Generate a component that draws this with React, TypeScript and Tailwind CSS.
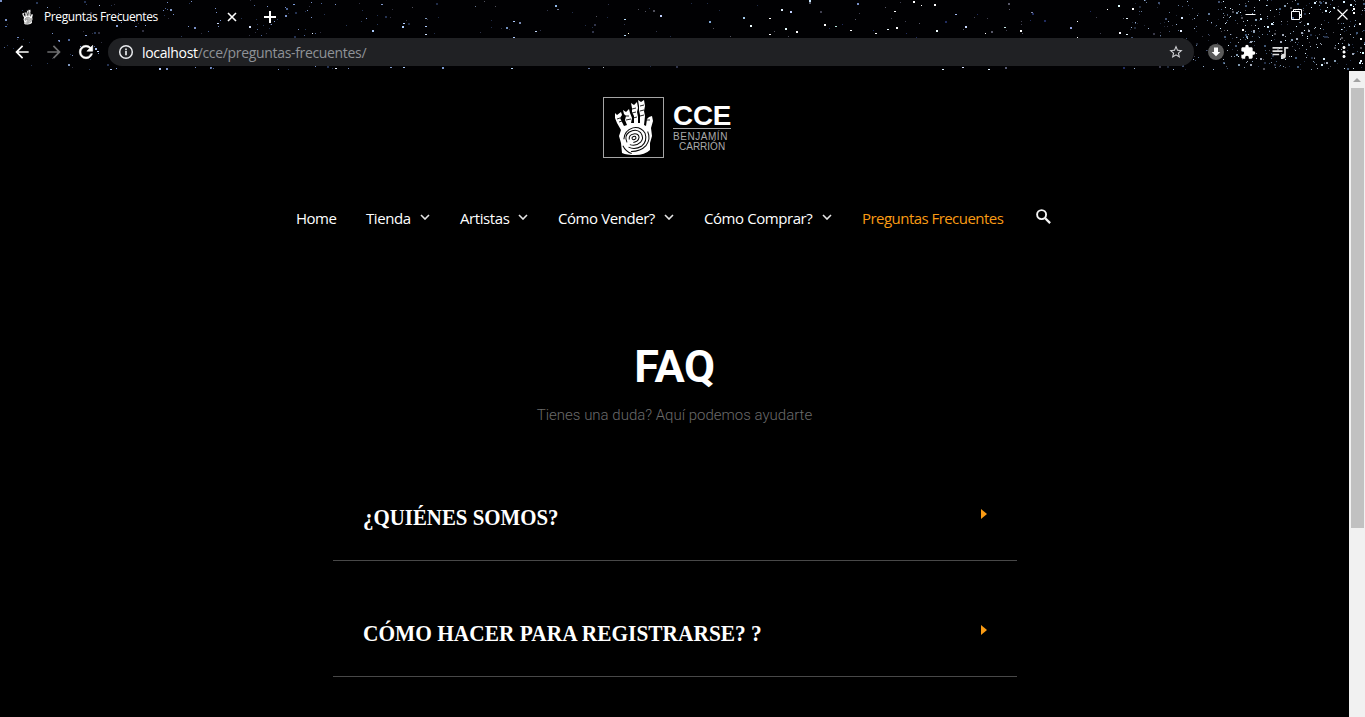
import React from "react";
import { MdArrowBack, MdArrowForward, MdStarBorder, MdExtension, MdQueueMusic, MdMoreVert } from "react-icons/md";

type Star = [number, number, number, string];

const namedStars: Star[] = [
  [99, 5, 1, "#b8c8f0"], [47, 7, 1, "#90a8d8"], [118, 13, 1, "#7088b8"], [170, 9, 2, "#8098c8"], [293, 4, 1.5, "#7898d8"], [381, 4, 1.5, "#8098d0"],
  [217, 23, 1.5, "#c8d8f8"], [249, 26, 2, "#d8e4ff"], [312, 33, 1, "#e8f0ff"], [372, 30, 2, "#a8c8f8"], [95, 48, 2, "#a8c0f0"], [97, 51, 1.5, "#d0e0ff"],
  [5, 26, 1.5, "#5070b0"], [17, 37, 1.5, "#7088c0"], [58, 40, 2, "#7890c8"], [116, 25, 2, "#8098d0"], [85, 35, 1.5, "#8ca4dc"], [135, 26, 1.5, "#6880b8"],
  [68, 64, 2, "#8098c0"], [110, 69, 1.5, "#b0c8f8"], [159, 68, 2, "#b0c8f8"], [210, 67, 2, "#7088c0"], [335, 68, 1.5, "#e8f0ff"], [390, 67, 1.5, "#8098c8"],
  [403, 23, 1.5, "#b0ccff"], [402, 26, 2, "#b0d0ff"], [425, 18, 1.5, "#8098b8"], [425, 26, 1.5, "#b0ccff"], [425, 34, 1.5, "#cce0ff"], [475, 6, 1, "#66758f"],
  [513, 21, 1.5, "#b0ccff"], [506, 27, 2, "#7090c0"], [519, 22, 2, "#7888b0"], [513, 37, 1.5, "#b0ccff"], [535, 31, 1.5, "#c0d4f8"], [555, 5, 2, "#90b8e8"],
  [557, 9, 1.5, "#707898"], [624, 19, 1.5, "#b8dcf8"], [624, 35, 1.5, "#b8dcf8"], [628, 33, 1, "#fff8d0"], [660, 15, 2, "#c0d0ff"], [709, 21, 2, "#80a8d8"],
  [743, 17, 2, "#a0c8e8"], [750, 25, 2, "#f0ffff"], [769, 18, 1.5, "#fff"], [769, 34, 1.5, "#fff"], [781, 9, 2, "#e0f0ff"], [790, 11, 2, "#c0d0ff"], [785, 28, 2, "#e8ffff"], [796, 31, 2, "#fff"],
  [403, 67, 1.5, "#a8c8f8"], [442, 67, 2, "#7898d0"], [511, 68, 1.5, "#b8d8f8"], [588, 68, 1.5, "#607098"], [603, 67, 1, "#b0b8c0"],
  [809, 0, 2, "#c8e8ff"], [824, 24, 2, "#fff"], [835, 26, 1.5, "#b8e8e0"], [850, 30, 1.5, "#fff"], [857, 3, 2, "#7890c8"], [887, 29, 1.5, "#e8f8ff"], [896, 27, 2, "#fff"], [894, 11, 1.5, "#fff"], [875, 33, 1.5, "#fff"], [913, 1, 2, "#fff"], [921, 5, 1, "#fff"], [934, 4, 2, "#fff"], [936, 30, 2, "#f0ffff"], [955, 14, 1.5, "#a0b8f0"], [965, 26, 2, "#c8d8ff"], [985, 33, 1, "#fff"], [1004, 27, 1.5, "#c8e8e8"], [1020, 30, 2, "#fff"], [1031, 12, 1.5, "#8088a8"], [1070, 27, 2, "#90a0e0"], [1077, 21, 1, "#fff"], [1077, 37, 1, "#fff"], [1107, 9, 1, "#fff"], [1118, 5, 2, "#e0ffff"], [1119, 32, 2, "#f8f8ff"], [1126, 18, 1.5, "#e8f8ff"], [1126, 34, 1.5, "#e8f8ff"],
  [942, 69, 1.5, "#e0f0ff"], [962, 67, 1.5, "#d8e0ff"], [988, 69, 1.5, "#e0f0ff"], [1005, 67, 2, "#545870"],
  [1132, 8, 2, "#fff"], [1181, 17, 2, "#d8e8ff"], [1180, 30, 2, "#e8f0ff"], [1242, 29, 2, "#fff"], [1353, 8, 2, "#fff"], [1353, 12, 2, "#fff"], [1359, 23, 2, "#fff"], [1333, 7, 2, "#e8ffff"], [1360, 38, 2, "#fff"], [1362, 52, 2, "#d8ffff"], [1360, 60, 2, "#e8f4ff"],
];

const scatter = (count: number, from: number, to: number, seed: number, colors: string[]): Star[] => {
  let s = seed;
  const next = () => {
    s = (s * 16807) % 2147483647;
    return s / 2147483647;
  };
  return Array.from({ length: count }, () => [
    Math.floor(from + next() * (to - from)),
    Math.floor(next() * 70),
    next() > 0.82 ? 2 : 1,
    colors[Math.floor(next() * colors.length)],
  ] as Star);
};

const stars: Star[] = [
  ...namedStars,
  ...scatter(175, 0, 400, 4217, ["#243252", "#4c6498", "#303040", "#7890c8", "#283858"]),
  ...scatter(75, 400, 800, 9281, ["#30344a", "#50505c", "#202c48"]),
  ...scatter(60, 800, 1130, 1283, ["#404050", "#202c60", "#585868"]),
  ...scatter(120, 1130, 1220, 771, ["#405070", "#383848", "#607898", "#202838", "#98b0d0"]),
  ...scatter(360, 1220, 1365, 5519, ["#405878", "#505058", "#8098b0", "#243048", "#d8f0ff", "#a0a8b8"]),
];

const Starfield = () => (
  <svg className="pointer-events-none absolute inset-0" width="1365" height="70" shapeRendering="crispEdges" aria-hidden="true">
    {stars.map(([x, y, r, c], i) => (
      <rect key={i} x={x} y={y} width={r > 1 ? 2 : 1} height={r === 2 ? 2 : 1} fill={c} />
    ))}
  </svg>
);

const Hand = ({ className, viewBox = "0 0 61 61" }: { className: string; viewBox?: string }) => (
  <svg className={className} viewBox={viewBox} fill="none" aria-hidden="true">
    <path
      d="M12 16 L14 18 L18 15 L19 18 L17 21 L18 23 L21 29 L24 28 L22 23 L23 19 L21 17 L20 13 L23 15 L26 12 L27 16 L29 21 L28 26 L31 26 L31 19 L29 15 L29 11 L28 6 L31 8 L34 5 L35 11 L34 15 L35 20 L35 26 L37 26 L37 18 L36 13 L36 9 L35 3 L38 5 L41 3 L42 9 L41 14 L42 19 L41 28 L43 29 L44 22 L46 20 L49 19 L50 24 L48 31 L49 39 L47 46 L47 53 Q42 58 32 58 Q24 58 19 56 L18 46 L16 39 L18 33 L14 26 L12 21 Z"
      fill="#fff"
    />
    <g stroke="#050505" strokeWidth="1" transform="rotate(-18 31 41)">
      <ellipse cx="31" cy="41" rx="2" ry="1.6" />
      <path d="M26 41 q1-5 6-4 q5 1 4 5 q-2 4-7 3 M23 43 q-1-7 5-9 q8-2 11 4 q2 6-3 9 q-6 3-11-1 M21 39 q3-8 12-8 q8 1 10 9 q0 8-7 11 q-8 2-13-3 M24 53 q9 3 16-1 q7-5 6-13 M18 45 q1 7 6 10" />
    </g>
    <path d="m14 22 3-1m-1 4 3-1m2-5 5 0m-3 4 5-1m1-10 4-1m-4 5 4-1m-3 6 4-1m3-11 4-1m-4 6 4-1m-4 6 4-1m2 5 4 0" stroke="#111" strokeWidth=".9" />
  </svg>
);

const Logo = () => (
  <div className="flex h-[61px] w-[128px] gap-[9px]">
    <div className="size-[61px] shrink-0 border border-[#a5a5a5]">
      <Hand className="size-[59px]" viewBox="1 1 59 59" />
    </div>
    <div className="w-[58px] font-['Liberation_Sans',sans-serif]">
      <div className="mt-[5px] h-[26px] origin-left scale-x-[1.03] text-[27px] leading-[28px] font-bold tracking-[-0.2px] text-white">CCE</div>
      <div className="h-px bg-[#aaa]" />
      <div className="mt-[3px] text-[10px] leading-[10px] tracking-[0.55px] whitespace-nowrap text-[#aaa]">BENJAMÍN</div>
      <div className="pl-[6px] text-[10px] leading-[10px] whitespace-nowrap text-[#aaa]">CARRIÓN</div>
    </div>
  </div>
);

const Reload = ({ className }: { className: string }) => (
  <svg className={className} viewBox="0 0 24 24" fill="currentColor" stroke="currentColor" strokeWidth="0.7">
    <path d="M17.65 6.35A7.958 7.958 0 0 0 12 4c-4.42 0-7.99 3.58-7.99 8s3.57 8 7.99 8c3.73 0 6.84-2.55 7.73-6h-2.08A5.99 5.99 0 0 1 12 18c-3.31 0-6-2.69-6-6s2.69-6 6-6c1.66 0 3.14.69 4.22 1.78L13 11h7V4l-2.35 2.35z" />
  </svg>
);

const Info = ({ className }: { className: string }) => (
  <svg className={className} viewBox="0 0 16 16" fill="none" stroke="currentColor">
    <circle cx="8" cy="8" r="6.3" strokeWidth="1.5" />
    <path d="M8 7v4.2M8 4.6v1.6" strokeWidth="1.7" />
  </svg>
);

const Search = ({ className }: { className: string }) => (
  <svg className={className} viewBox="0 0 15 15" fill="none" stroke="#f5f5f5">
    <circle cx="5.6" cy="5.6" r="4.5" strokeWidth="1.9" />
    <path d="m9.2 9.2 4.9 4.9" strokeWidth="2.3" />
  </svg>
);

const BrowserBar = () => (
  <header className="relative h-[70px] shrink-0 overflow-hidden bg-[#010103] font-['Open_Sans',sans-serif] text-white">
    <Starfield />
    <div className="relative flex h-[34px] items-center">
      <Hand className="ml-[20px] size-[16px]" viewBox="3 1 59 59" />
      <span className="ml-[8px] w-[179px] text-[12px] leading-4 tracking-[-0.39px] whitespace-nowrap">Preguntas Frecuentes</span>
      <svg className="ml-[4px]" width="10" height="10" viewBox="0 0 10 10" stroke="#fff" strokeWidth="1.6"><path d="m1 1 8 8M9 1 1 9" /></svg>
      <svg className="ml-[27px]" width="12" height="12" viewBox="0 0 12 12" stroke="#fff" strokeWidth="2"><path d="M6 0v12M0 6h12" /></svg>
      <div className="ml-auto flex h-7 items-center self-start pr-[17px]">
        <svg width="11" height="11" viewBox="0 0 11 11" stroke="#fff"><path d="M.5 5.5h10" /></svg>
        <svg className="ml-[35px]" width="11" height="11" viewBox="0 0 11 11" fill="none" stroke="#fff"><path d="M.5 2.5h8v8h-8zM2.5 2.5v-2h8v8h-2" /></svg>
        <svg className="ml-[35px]" width="11" height="11" viewBox="0 0 11 11" stroke="#fff" strokeWidth="1.2"><path d="m.5.5 10 10M10.5.5l-10 10" /></svg>
      </div>
    </div>
    <div className="relative mt-1 flex h-7 items-center">
      <MdArrowBack className="ml-[12px] size-5" />
      <MdArrowForward className="ml-3 size-5 text-[#6e6e70]" />
      <Reload className="ml-3 size-5" />
      <div className="ml-3 flex h-7 w-[1086px] items-center rounded-full bg-[#202124]">
        <Info className="ml-[10px] size-4 text-[#e8eaed]" />
        <span className="ml-2 pt-px text-[14px] leading-5 tracking-[-0.33px] text-[#8f9297]"><span className="text-white">localhost</span>/cce/preguntas-frecuentes/</span>
        <MdStarBorder className="mr-[10px] ml-auto size-4 text-[#d2d3d6]" />
      </div>
      <svg className="ml-[14px]" width="16" height="16" viewBox="0 0 16 16"><circle cx="8" cy="8" r="8" fill="#5a5a5a" /><path d="M6 3.5h4V8h2.3L8 12.3 3.7 8H6z" fill="#fff" /></svg>
      <MdExtension className="ml-[16px] size-4" />
      <MdQueueMusic className="ml-[14px] size-5 text-[#ddd]" />
      <MdMoreVert className="ml-[45px] size-[18px]" />
    </div>
  </header>
);

const Chevron = () => (
  <svg className="mb-[2px] ml-auto" width="10" height="6" viewBox="0 0 10 6" fill="none" stroke="#e6e6e6" strokeWidth="1.6"><path d="m1 1 4 4 4-4" /></svg>
);

const menu = [
  { label: "Home", box: "w-[40px]", fit: "tracking-[-0.5px]" },
  { label: "Tienda", box: "w-[64px]", fit: "tracking-[-0.4px]", sub: true },
  { label: "Artistas", box: "w-[68px]", fit: "tracking-[-0.42px]", sub: true },
  { label: "Cómo Vender?", box: "w-[116px]", fit: "tracking-[-0.43px]", sub: true },
  { label: "Cómo Comprar?", box: "w-[128px]", fit: "tracking-[-0.43px]", sub: true },
  { label: "Preguntas Frecuentes", box: "w-[142px]", fit: "tracking-[-0.54px]", active: true },
];

const Nav = () => (
  <nav className="mt-[48px] ml-[296px] flex h-6 items-center gap-[30px] font-['Open_Sans',sans-serif] text-[15px] leading-6 text-white">
    {menu.map((m) => (
      <a key={m.label} className={`flex shrink-0 items-center whitespace-nowrap ${m.box} ${m.active ? "text-[#f99b14]" : ""}`}>
        <span className={m.fit}>{m.label}</span>
        {m.sub && <Chevron />}
      </a>
    ))}
    <Search className="mb-[3px] ml-[2px] size-[15px]" />
  </nav>
);

const questions = [
  { text: "¿QUIÉNES SOMOS?", fit: "scale-x-[0.87]" },
  { text: "CÓMO HACER PARA REGISTRARSE? ?", fit: "scale-x-[0.891]" },
];

const Faq = () => (
  <section className="mx-auto mt-[113px] flex w-[684px] flex-col">
    <h1 className="text-center font-['Roboto',sans-serif] text-[45px] leading-[48px] font-bold tracking-[-0.3px] text-white">FAQ</h1>
    <p className="mt-[12px] text-center font-['Roboto',sans-serif] text-[15px] leading-6 font-light text-[#6b6b6b]">Tienes una duda? Aquí podemos ayudarte</p>
    <div className="mt-[18px]">
      {questions.map((q) => (
        <div key={q.text} className="flex h-[116px] items-end border-b border-[#484848] pb-[28px] pl-[30px]">
          <h2 className={`origin-left font-['Liberation_Serif',serif] text-[24px] leading-[30px] font-bold whitespace-nowrap text-white ${q.fit}`}>{q.text}</h2>
          <svg className="mr-[30px] mb-[13px] ml-auto" width="6" height="10" viewBox="0 0 6 10"><path d="M0 0 6 5 0 10Z" fill="#f99b14" /></svg>
        </div>
      ))}
    </div>
  </section>
);

export default function App() {
  return (
    <div className="flex h-[717px] w-[1365px] flex-col overflow-hidden bg-black">
      <BrowserBar />
      <div className="mt-px flex min-h-0 flex-1">
        <main className="w-[1349px] pt-[26px]">
          <div className="flex pl-[603px]"><Logo /></div>
          <Nav />
          <Faq />
        </main>
        <div className="flex w-4 flex-col items-center bg-[#f1f1f1]">
          <div className="flex h-[17px] items-center justify-center">
            <svg width="8" height="4" viewBox="0 0 8 4"><path d="M0 4 4 0l4 4Z" fill="#a3a3a3" /></svg>
          </div>
          <div className="h-[440px] w-[13px] bg-[#c1c1c1]" />
        </div>
      </div>
    </div>
  );
}
